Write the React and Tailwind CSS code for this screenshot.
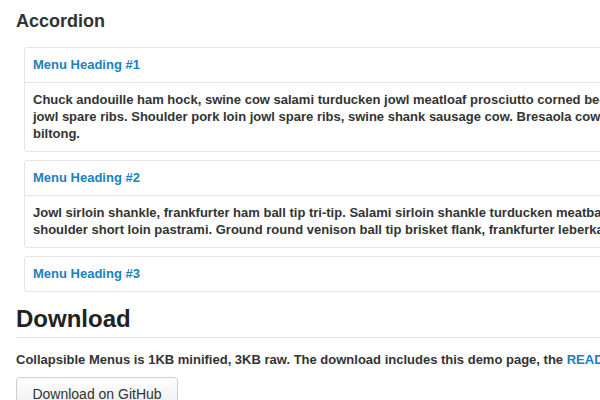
import React from 'react';

const ITEMS = [
  {
    title: 'Menu Heading #1',
    lines: [
      'Chuck andouille ham hock, swine cow salami turducken jowl meatloaf prosciutto corned beef pork belly tail pancetta tongue short ribs',
      'jowl spare ribs. Shoulder pork loin jowl spare ribs, swine shank sausage cow. Bresaola cow shoulder pork belly pig hamburger',
      'biltong.',
    ],
  },
  {
    title: 'Menu Heading #2',
    lines: [
      'Jowl sirloin shankle, frankfurter ham ball tip tri-tip. Salami sirloin shankle turducken meatball pork loin, flank chuck ribeye',
      'shoulder short loin pastrami. Ground round venison ball tip brisket flank, frankfurter leberkas pig.',
    ],
  },
  { title: 'Menu Heading #3' },
];

export default function App() {
  return (
    <div className="w-[600px] h-[400px] overflow-hidden bg-white text-[#333] font-['Liberation_Sans',Arial,sans-serif]">
      <div className="w-[900px] pl-4">
        <h2 className="h-[42px] flex items-center text-[18px] font-bold leading-none">Accordion</h2>
        <div className="ml-2 mt-[5px] flex flex-col gap-[8px]">
          {ITEMS.map((it) => (
            <div key={it.title} className="border border-[#e6e6e6] rounded-[3px] bg-white">
              <div className="h-[34px] flex items-center px-2 text-[13px] font-bold text-[#1a80c2]">
                {it.title}
              </div>
              {it.lines && (
                <p className="border-t border-[#e6e6e6] px-2 pt-[8px] pb-[9px] text-[13px] leading-[17px] font-bold">
                  {it.lines.map((l) => (
                    <span key={l} className="block whitespace-nowrap">{l}</span>
                  ))}
                </p>
              )}
            </div>
          ))}
        </div>
        <h1 className="mt-[10px] h-[34px] flex items-center text-[24px] font-bold leading-none text-[#222]">Download</h1>
        <div className="mt-[1px] w-[584px] border-b border-[#e8e8e8]" />
        <p className="mt-[13px] text-[13px] leading-[17px] font-bold whitespace-nowrap">
          Collapsible Menus is 1KB minified, 3KB raw. The download includes this demo page, the{' '}
          <a className="text-[#1a80c2]">README</a> and the source.
        </p>
        <button className="mt-[9px] w-[162px] h-[44px] border border-[#cfcfcf] rounded-[4px] bg-gradient-to-b from-white to-[#e6e6e6] text-[14px] text-[#333] pt-[6px] flex justify-center items-start">
          Download on GitHub
        </button>
      </div>
    </div>
  );
}
